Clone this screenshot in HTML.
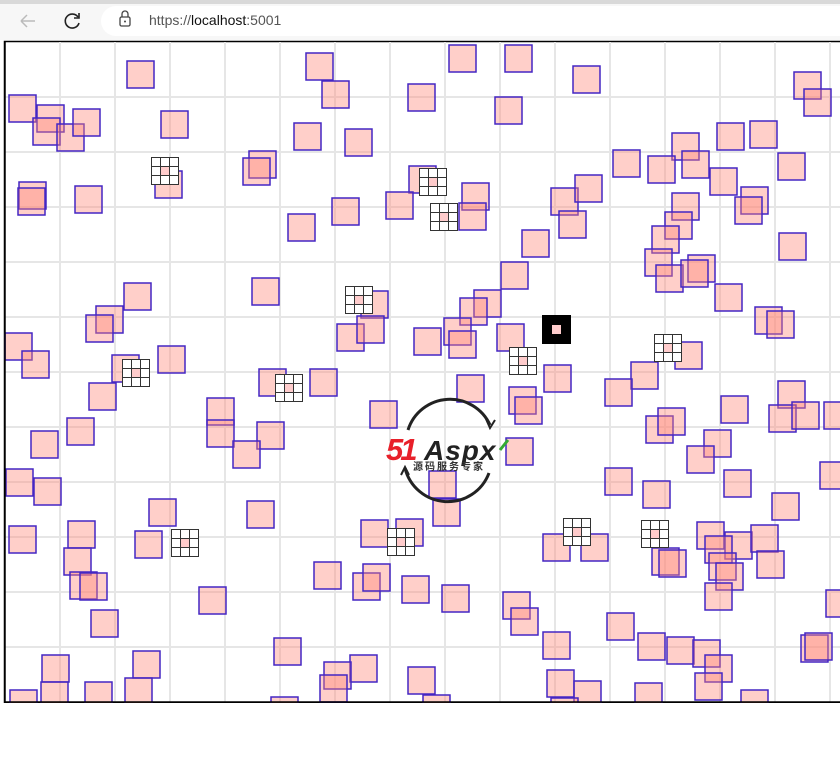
<!DOCTYPE html>
<html><head><meta charset="utf-8"><style>
html,body{margin:0;padding:0;width:840px;height:773px;overflow:hidden;background:#fff;font-family:"Liberation Sans",sans-serif}
.top{position:absolute;left:0;top:0;width:840px;height:40px;background:#f7f7f7}
.top .strip{position:absolute;left:0;top:0;width:840px;height:4px;background:#d9d9d9}
.addr{position:absolute;left:101px;top:6px;width:760px;height:30px;border-radius:15px;background:#fff}
.url{position:absolute;left:149px;top:12px;font-size:14px;color:#555}
.url b{font-weight:normal;color:#111}
svg{position:absolute;left:0;top:0}
.s rect{fill:#ff8877;fill-opacity:.4;stroke:#4426c4;stroke-width:1.5}
</style></head><body>
<div class="top"><div class="strip"></div><div class="addr"></div>
<svg width="120" height="40"><path d="M21 21h14M21 21l6-6M21 21l6 6" stroke="#bbb" stroke-width="1.5" fill="none"/>
<path d="M78 17a7 7 0 1 0 1 6" stroke="#222" stroke-width="1.6" fill="none"/><path d="M79 13v5h-5" stroke="#222" stroke-width="1.6" fill="none"/></svg>
<svg width="140" height="40" style="left:0"><rect x="120" y="17" width="10" height="9" rx="1.5" fill="none" stroke="#444" stroke-width="1.3"/><path d="M122 17v-3a3 3 0 0 1 6 0v3" fill="none" stroke="#444" stroke-width="1.3"/><circle cx="125" cy="21.5" r="1" fill="#444"/></svg>
<div class="url">https://<b>localhost</b>:5001</div></div>
<svg width="840" height="773" style="top:0">
<rect x="4.5" y="41.5" width="840" height="661" fill="#fff" stroke="#000" stroke-width="1.5"/>
<g stroke="#e6e6e6" stroke-width="2">
<path d="M60 42V702M115 42V702M170 42V702M225 42V702M280 42V702M335 42V702M390 42V702M445 42V702M500 42V702M555 42V702M610 42V702M665 42V702M720 42V702M775 42V702M830 42V702"/>
<path d="M5 97H840M5 152H840M5 207H840M5 262H840M5 317H840M5 372H840M5 427H840M5 482H840M5 537H840M5 592H840M5 647H840"/>
</g>
<g class="s">
<rect x="127" y="61" width="27" height="27"/><rect x="306" y="53" width="27" height="27"/><rect x="449" y="45" width="27" height="27"/><rect x="505" y="45" width="27" height="27"/><rect x="573" y="66" width="27" height="27"/><rect x="794" y="72" width="27" height="27"/><rect x="804" y="89" width="27" height="27"/><rect x="322" y="81" width="27" height="27"/><rect x="408" y="84" width="27" height="27"/><rect x="9" y="95" width="27" height="27"/><rect x="37" y="105" width="27" height="27"/><rect x="33" y="118" width="27" height="27"/><rect x="57" y="124" width="27" height="27"/><rect x="73" y="109" width="27" height="27"/><rect x="161" y="111" width="27" height="27"/><rect x="495" y="97" width="27" height="27"/><rect x="294" y="123" width="27" height="27"/><rect x="345" y="129" width="27" height="27"/><rect x="249" y="151" width="27" height="27"/><rect x="243" y="158" width="27" height="27"/><rect x="672" y="133" width="27" height="27"/><rect x="717" y="123" width="27" height="27"/><rect x="750" y="121" width="27" height="27"/><rect x="613" y="150" width="27" height="27"/><rect x="648" y="156" width="27" height="27"/><rect x="682" y="151" width="27" height="27"/><rect x="710" y="168" width="27" height="27"/><rect x="778" y="153" width="27" height="27"/><rect x="19" y="182" width="27" height="27"/><rect x="18" y="188" width="27" height="27"/><rect x="75" y="186" width="27" height="27"/><rect x="155" y="171" width="27" height="27"/><rect x="409" y="166" width="27" height="27"/><rect x="462" y="183" width="27" height="27"/><rect x="386" y="192" width="27" height="27"/><rect x="459" y="203" width="27" height="27"/><rect x="332" y="198" width="27" height="27"/><rect x="288" y="214" width="27" height="27"/><rect x="551" y="188" width="27" height="27"/><rect x="575" y="175" width="27" height="27"/><rect x="559" y="211" width="27" height="27"/><rect x="741" y="187" width="27" height="27"/><rect x="735" y="197" width="27" height="27"/><rect x="672" y="193" width="27" height="27"/><rect x="665" y="212" width="27" height="27"/><rect x="652" y="226" width="27" height="27"/><rect x="522" y="230" width="27" height="27"/><rect x="779" y="233" width="27" height="27"/><rect x="645" y="249" width="27" height="27"/><rect x="656" y="265" width="27" height="27"/><rect x="688" y="255" width="27" height="27"/><rect x="681" y="260" width="27" height="27"/><rect x="715" y="284" width="27" height="27"/><rect x="501" y="262" width="27" height="27"/><rect x="252" y="278" width="27" height="27"/><rect x="124" y="283" width="27" height="27"/><rect x="361" y="291" width="27" height="27"/><rect x="474" y="290" width="27" height="27"/><rect x="460" y="298" width="27" height="27"/><rect x="444" y="318" width="27" height="27"/><rect x="96" y="306" width="27" height="27"/><rect x="86" y="315" width="27" height="27"/><rect x="337" y="324" width="27" height="27"/><rect x="357" y="316" width="27" height="27"/><rect x="414" y="328" width="27" height="27"/><rect x="449" y="331" width="27" height="27"/><rect x="497" y="324" width="27" height="27"/><rect x="755" y="307" width="27" height="27"/><rect x="767" y="311" width="27" height="27"/><rect x="5" y="333" width="27" height="27"/><rect x="22" y="351" width="27" height="27"/><rect x="158" y="346" width="27" height="27"/><rect x="112" y="355" width="27" height="27"/><rect x="675" y="342" width="27" height="27"/><rect x="631" y="362" width="27" height="27"/><rect x="544" y="365" width="27" height="27"/><rect x="457" y="375" width="27" height="27"/><rect x="259" y="369" width="27" height="27"/><rect x="310" y="369" width="27" height="27"/><rect x="89" y="383" width="27" height="27"/><rect x="605" y="379" width="27" height="27"/><rect x="207" y="398" width="27" height="27"/><rect x="207" y="420" width="27" height="27"/><rect x="370" y="401" width="27" height="27"/><rect x="509" y="387" width="27" height="27"/><rect x="515" y="397" width="27" height="27"/><rect x="721" y="396" width="27" height="27"/><rect x="778" y="381" width="27" height="27"/><rect x="769" y="405" width="27" height="27"/><rect x="792" y="402" width="27" height="27"/><rect x="824" y="402" width="27" height="27"/><rect x="67" y="418" width="27" height="27"/><rect x="31" y="431" width="27" height="27"/><rect x="257" y="422" width="27" height="27"/><rect x="233" y="441" width="27" height="27"/><rect x="646" y="416" width="27" height="27"/><rect x="658" y="408" width="27" height="27"/><rect x="704" y="430" width="27" height="27"/><rect x="687" y="446" width="27" height="27"/><rect x="506" y="438" width="27" height="27"/><rect x="6" y="469" width="27" height="27"/><rect x="34" y="478" width="27" height="27"/><rect x="724" y="470" width="27" height="27"/><rect x="820" y="462" width="27" height="27"/><rect x="605" y="468" width="27" height="27"/><rect x="643" y="481" width="27" height="27"/><rect x="429" y="471" width="27" height="27"/><rect x="149" y="499" width="27" height="27"/><rect x="247" y="501" width="27" height="27"/><rect x="433" y="499" width="27" height="27"/><rect x="772" y="493" width="27" height="27"/><rect x="9" y="526" width="27" height="27"/><rect x="68" y="521" width="27" height="27"/><rect x="135" y="531" width="27" height="27"/><rect x="361" y="520" width="27" height="27"/><rect x="396" y="519" width="27" height="27"/><rect x="543" y="534" width="27" height="27"/><rect x="581" y="534" width="27" height="27"/><rect x="697" y="522" width="27" height="27"/><rect x="725" y="532" width="27" height="27"/><rect x="705" y="536" width="27" height="27"/><rect x="709" y="553" width="27" height="27"/><rect x="716" y="563" width="27" height="27"/><rect x="751" y="525" width="27" height="27"/><rect x="757" y="551" width="27" height="27"/><rect x="652" y="548" width="27" height="27"/><rect x="659" y="550" width="27" height="27"/><rect x="64" y="548" width="27" height="27"/><rect x="70" y="572" width="27" height="27"/><rect x="80" y="573" width="27" height="27"/><rect x="314" y="562" width="27" height="27"/><rect x="353" y="573" width="27" height="27"/><rect x="363" y="564" width="27" height="27"/><rect x="402" y="576" width="27" height="27"/><rect x="442" y="585" width="27" height="27"/><rect x="199" y="587" width="27" height="27"/><rect x="503" y="592" width="27" height="27"/><rect x="511" y="608" width="27" height="27"/><rect x="705" y="583" width="27" height="27"/><rect x="91" y="610" width="27" height="27"/><rect x="607" y="613" width="27" height="27"/><rect x="543" y="632" width="27" height="27"/><rect x="638" y="633" width="27" height="27"/><rect x="667" y="637" width="27" height="27"/><rect x="693" y="640" width="27" height="27"/><rect x="705" y="655" width="27" height="27"/><rect x="274" y="638" width="27" height="27"/><rect x="801" y="635" width="27" height="27"/><rect x="805" y="633" width="27" height="27"/><rect x="42" y="655" width="27" height="27"/><rect x="133" y="651" width="27" height="27"/><rect x="350" y="655" width="27" height="27"/><rect x="324" y="662" width="27" height="27"/><rect x="320" y="675" width="27" height="27"/><rect x="408" y="667" width="27" height="27"/><rect x="547" y="670" width="27" height="27"/><rect x="574" y="681" width="27" height="27"/><rect x="635" y="683" width="27" height="27"/><rect x="695" y="673" width="27" height="27"/><rect x="10" y="690" width="27" height="27"/><rect x="41" y="682" width="27" height="27"/><rect x="85" y="682" width="27" height="27"/><rect x="125" y="678" width="27" height="27"/><rect x="271" y="697" width="27" height="27"/><rect x="423" y="695" width="27" height="27"/><rect x="551" y="698" width="27" height="27"/><rect x="741" y="690" width="27" height="27"/><rect x="826" y="590" width="27" height="27"/>
</g>
<defs><g id="gr"><rect x="0" y="0" width="28" height="28" fill="#fff"/><rect x="10" y="10" width="8" height="8" fill="#fcc"/><path d="M0.5 0.5h27v27h-27zM9.5 0.5v27M18.5 0.5v27M0.5 9.5h27M0.5 18.5h27" fill="none" stroke="#333" stroke-width="1"/></g></defs>
<use href="#gr" x="151" y="157"/><use href="#gr" x="419" y="168"/><use href="#gr" x="430" y="203"/><use href="#gr" x="345" y="286"/><use href="#gr" x="122" y="359"/><use href="#gr" x="275" y="374"/><use href="#gr" x="509" y="347"/><use href="#gr" x="654" y="334"/><use href="#gr" x="563" y="518"/><use href="#gr" x="641" y="520"/><use href="#gr" x="171" y="529"/><use href="#gr" x="387" y="528"/>
<rect x="542" y="315" width="29" height="29" fill="#000"/><rect x="552" y="325" width="9" height="9" fill="#fcc"/>
<rect x="0" y="703" width="840" height="70" fill="#fff"/>
<path d="M5 42V702H840" fill="none" stroke="#000" stroke-width="1.5"/>
<path d="M408 430A44 44 0 0 1 490 425" fill="none" stroke="#222" stroke-width="3"/>
<path d="M486 419l4 9 5-8" fill="none" stroke="#222" stroke-width="2"/>
<path d="M405 468A44 44 0 0 0 489 473" fill="none" stroke="#222" stroke-width="3"/>
<path d="M409 475l-4-8-4 8" fill="none" stroke="#222" stroke-width="2"/>
<text x="386" y="460" font-family="Liberation Sans,sans-serif" font-weight="bold" font-style="italic" font-size="31" fill="#e8202a" letter-spacing="-3">51</text>
<text x="424" y="460" font-family="Liberation Sans,sans-serif" font-weight="bold" font-style="italic" font-size="28" fill="#222" letter-spacing="1">Aspx</text>
<path d="M500 450l8-10" stroke="#3a3" stroke-width="3"/>
<text x="413" y="470" font-family="Liberation Sans,Noto Sans CJK SC,sans-serif" font-weight="bold" font-size="10" fill="#333" letter-spacing="2">源码服务专家</text>
</svg>
</body></html>
